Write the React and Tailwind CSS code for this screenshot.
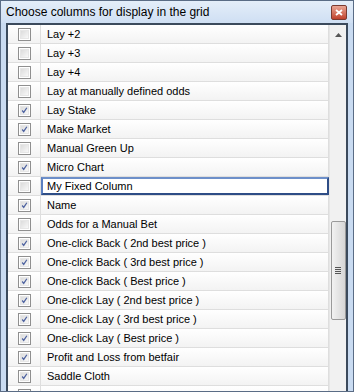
import React from "react";

const rows = [
  ["Lay +2", false],
  ["Lay +3", false],
  ["Lay +4", false],
  ["Lay at manually defined odds", false],
  ["Lay Stake", true],
  ["Make Market", true],
  ["Manual Green Up", false],
  ["Micro Chart", true],
  ["My Fixed Column", false, true],
  ["Name", true],
  ["Odds for a Manual Bet", false],
  ["One-click Back ( 2nd best price )", true],
  ["One-click Back ( 3rd best price )", true],
  ["One-click Back ( Best price )", true],
  ["One-click Lay ( 2nd best price )", true],
  ["One-click Lay ( 3rd best price )", true],
  ["One-click Lay ( Best price )", true],
  ["Profit and Loss from betfair", true],
  ["Saddle Cloth", true],
  ["", false],
];

function Check({ on }) {
  return (
    <div className="w-[13px] h-[13px] border border-[#8f8f8f] bg-white p-[1px]">
      <div className="w-full h-full bg-gradient-to-br from-[#dcdcdc] to-[#f8f8f8] border border-[#e6e6e6] flex items-center justify-center">
        {on && (
          <svg width="9" height="9" viewBox="0 0 9 9">
            <path d="M1.5 4.5 L3.5 7 L7.5 1" stroke="#4d62a0" strokeWidth="1.6" fill="none" />
          </svg>
        )}
      </div>
    </div>
  );
}

export default function App() {
  return (
    <div
      className="w-[354px] h-[392px] overflow-hidden flex flex-col bg-[#c9dbf1] border border-[#5a6c85]"
      style={{ fontFamily: "'Liberation Sans', Arial, sans-serif" }}
    >
      <div className="h-[22px] shrink-0 flex items-center justify-between pl-[5px] pr-[6px] bg-gradient-to-b from-[#e4eef9] to-[#cfdff3]">
        <span className="text-[12px] text-black">Choose columns for display in the grid</span>
        <div className="w-[16px] h-[15px] rounded-[2px] border border-[#7a3a30] bg-gradient-to-b from-[#e8a594] to-[#c0402c] flex items-center justify-center mt-[1px]">
          <svg width="8" height="7" viewBox="0 0 8 7">
            <path d="M1 1 L7 6 M7 1 L1 6" stroke="white" strokeWidth="1.8" />
          </svg>
        </div>
      </div>
      <div className="flex-1 px-[5px] pb-[2px]">
        <div className="h-full border-2 border-[#3b4a5c] bg-white flex overflow-hidden">
          <div className="flex-1 flex flex-col overflow-hidden">
            {rows.map(([label, on, edit], i) => (
              <div key={i} className="h-[19px] shrink-0 flex">
                <div className="w-[33px] shrink-0 flex items-center justify-center border-r border-b border-[#dedede] bg-gradient-to-b from-white to-[#f3f3f3]">
                  <Check on={on} />
                </div>
                {edit ? (
                  <div className="flex-1 flex items-center border-b border-[#dedede] bg-white">
                    <div className="h-[18px] w-full flex items-center pl-[4px] border-2 border-t-[#6d8fc9] border-l-[#5b7fc0] border-b-[#2e4d86] border-r-[#2e4d86] bg-white text-[11px] text-black">
                      {label}
                    </div>
                  </div>
                ) : (
                  <div className="flex-1 flex items-center pl-[6px] border-b border-r border-[#dedede] bg-gradient-to-b from-white to-[#f3f3f3] text-[11px] text-black">
                    {label}
                  </div>
                )}
              </div>
            ))}
          </div>
          <div className="w-[17px] shrink-0 bg-[#f1f1f1] border-l border-[#e6e6e6] flex flex-col items-center">
            <div className="h-[17px] flex items-center justify-center mt-[1px]">
              <svg width="7" height="4" viewBox="0 0 7 4"><path d="M0 4 L3.5 0 L7 4 Z" fill="#555" /></svg>
            </div>
            <div className="h-[178px]" />
            <div className="w-[15px] h-[99px] rounded-[2px] border border-[#9a9a9a] bg-gradient-to-r from-[#f2f2f2] via-[#e4e4e4] to-[#d6d6d6] flex items-center justify-center">
              <div className="flex flex-col gap-[1px]">
                <div className="w-[6px] h-[1px] bg-[#555]" />
                <div className="w-[6px] h-[1px] bg-[#555]" />
                <div className="w-[6px] h-[1px] bg-[#555]" />
                <div className="w-[6px] h-[1px] bg-[#555]" />
              </div>
            </div>
            <div className="flex-1" />
            <div className="h-[17px] flex items-center justify-center mb-[3px]">
              <svg width="7" height="4" viewBox="0 0 7 4"><path d="M0 0 L3.5 4 L7 0 Z" fill="#555" /></svg>
            </div>
          </div>
        </div>
      </div>
    </div>
  );
}
